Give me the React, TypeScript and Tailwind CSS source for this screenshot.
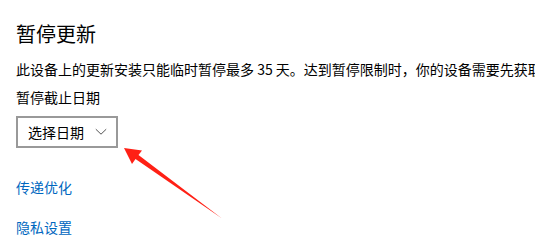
import React from "react";

export default function App() {
  return (
    <div
      className="relative w-[535px] h-[249px] overflow-hidden bg-white text-[#000]"
      style={{ fontFamily: '"Microsoft YaHei", "Noto Sans CJK SC", "Noto Sans", sans-serif' }}
    >
      <div className="flex flex-col pl-4 pt-[21px]">
        <h1 className="text-[20px] leading-[26px] font-normal">暂停更新</h1>
        <p className="mt-[12px] text-[14px] leading-[20px] whitespace-nowrap">
          此设备上的更新安装只能临时暂停最多 35 天。达到暂停限制时，你的设备需要先获取
        </p>
        <p className="mt-[8px] text-[14px] leading-[20px]">暂停截止日期</p>
        <div className="mt-[9px] flex">
          <div className="flex h-[32px] w-[102px] items-center border-2 border-[#999999] pl-[10px] pr-[9px]">
            <span className="text-[14px] leading-[20px]">选择日期</span>
            <svg className="ml-auto" width="12" height="8" viewBox="0 0 12 8" fill="none">
              <path d="M0.8 1.2 L6 6.2 L11.2 1.2" stroke="#555" strokeWidth="1" />
            </svg>
          </div>
        </div>
        <a className="mt-[29px] text-[14px] leading-[20px] text-[#0067c0]">传递优化</a>
        <a className="mt-[20px] text-[14px] leading-[20px] text-[#0067c0]">隐私设置</a>
      </div>
      <svg className="absolute left-0 top-0" width="535" height="249" viewBox="0 0 535 249">
        <polygon
          points="124,148 142,150.5 138.5,155 222,218.5 135.5,159 132,164"
          fill="#ff2015"
        />
      </svg>
    </div>
  );
}
